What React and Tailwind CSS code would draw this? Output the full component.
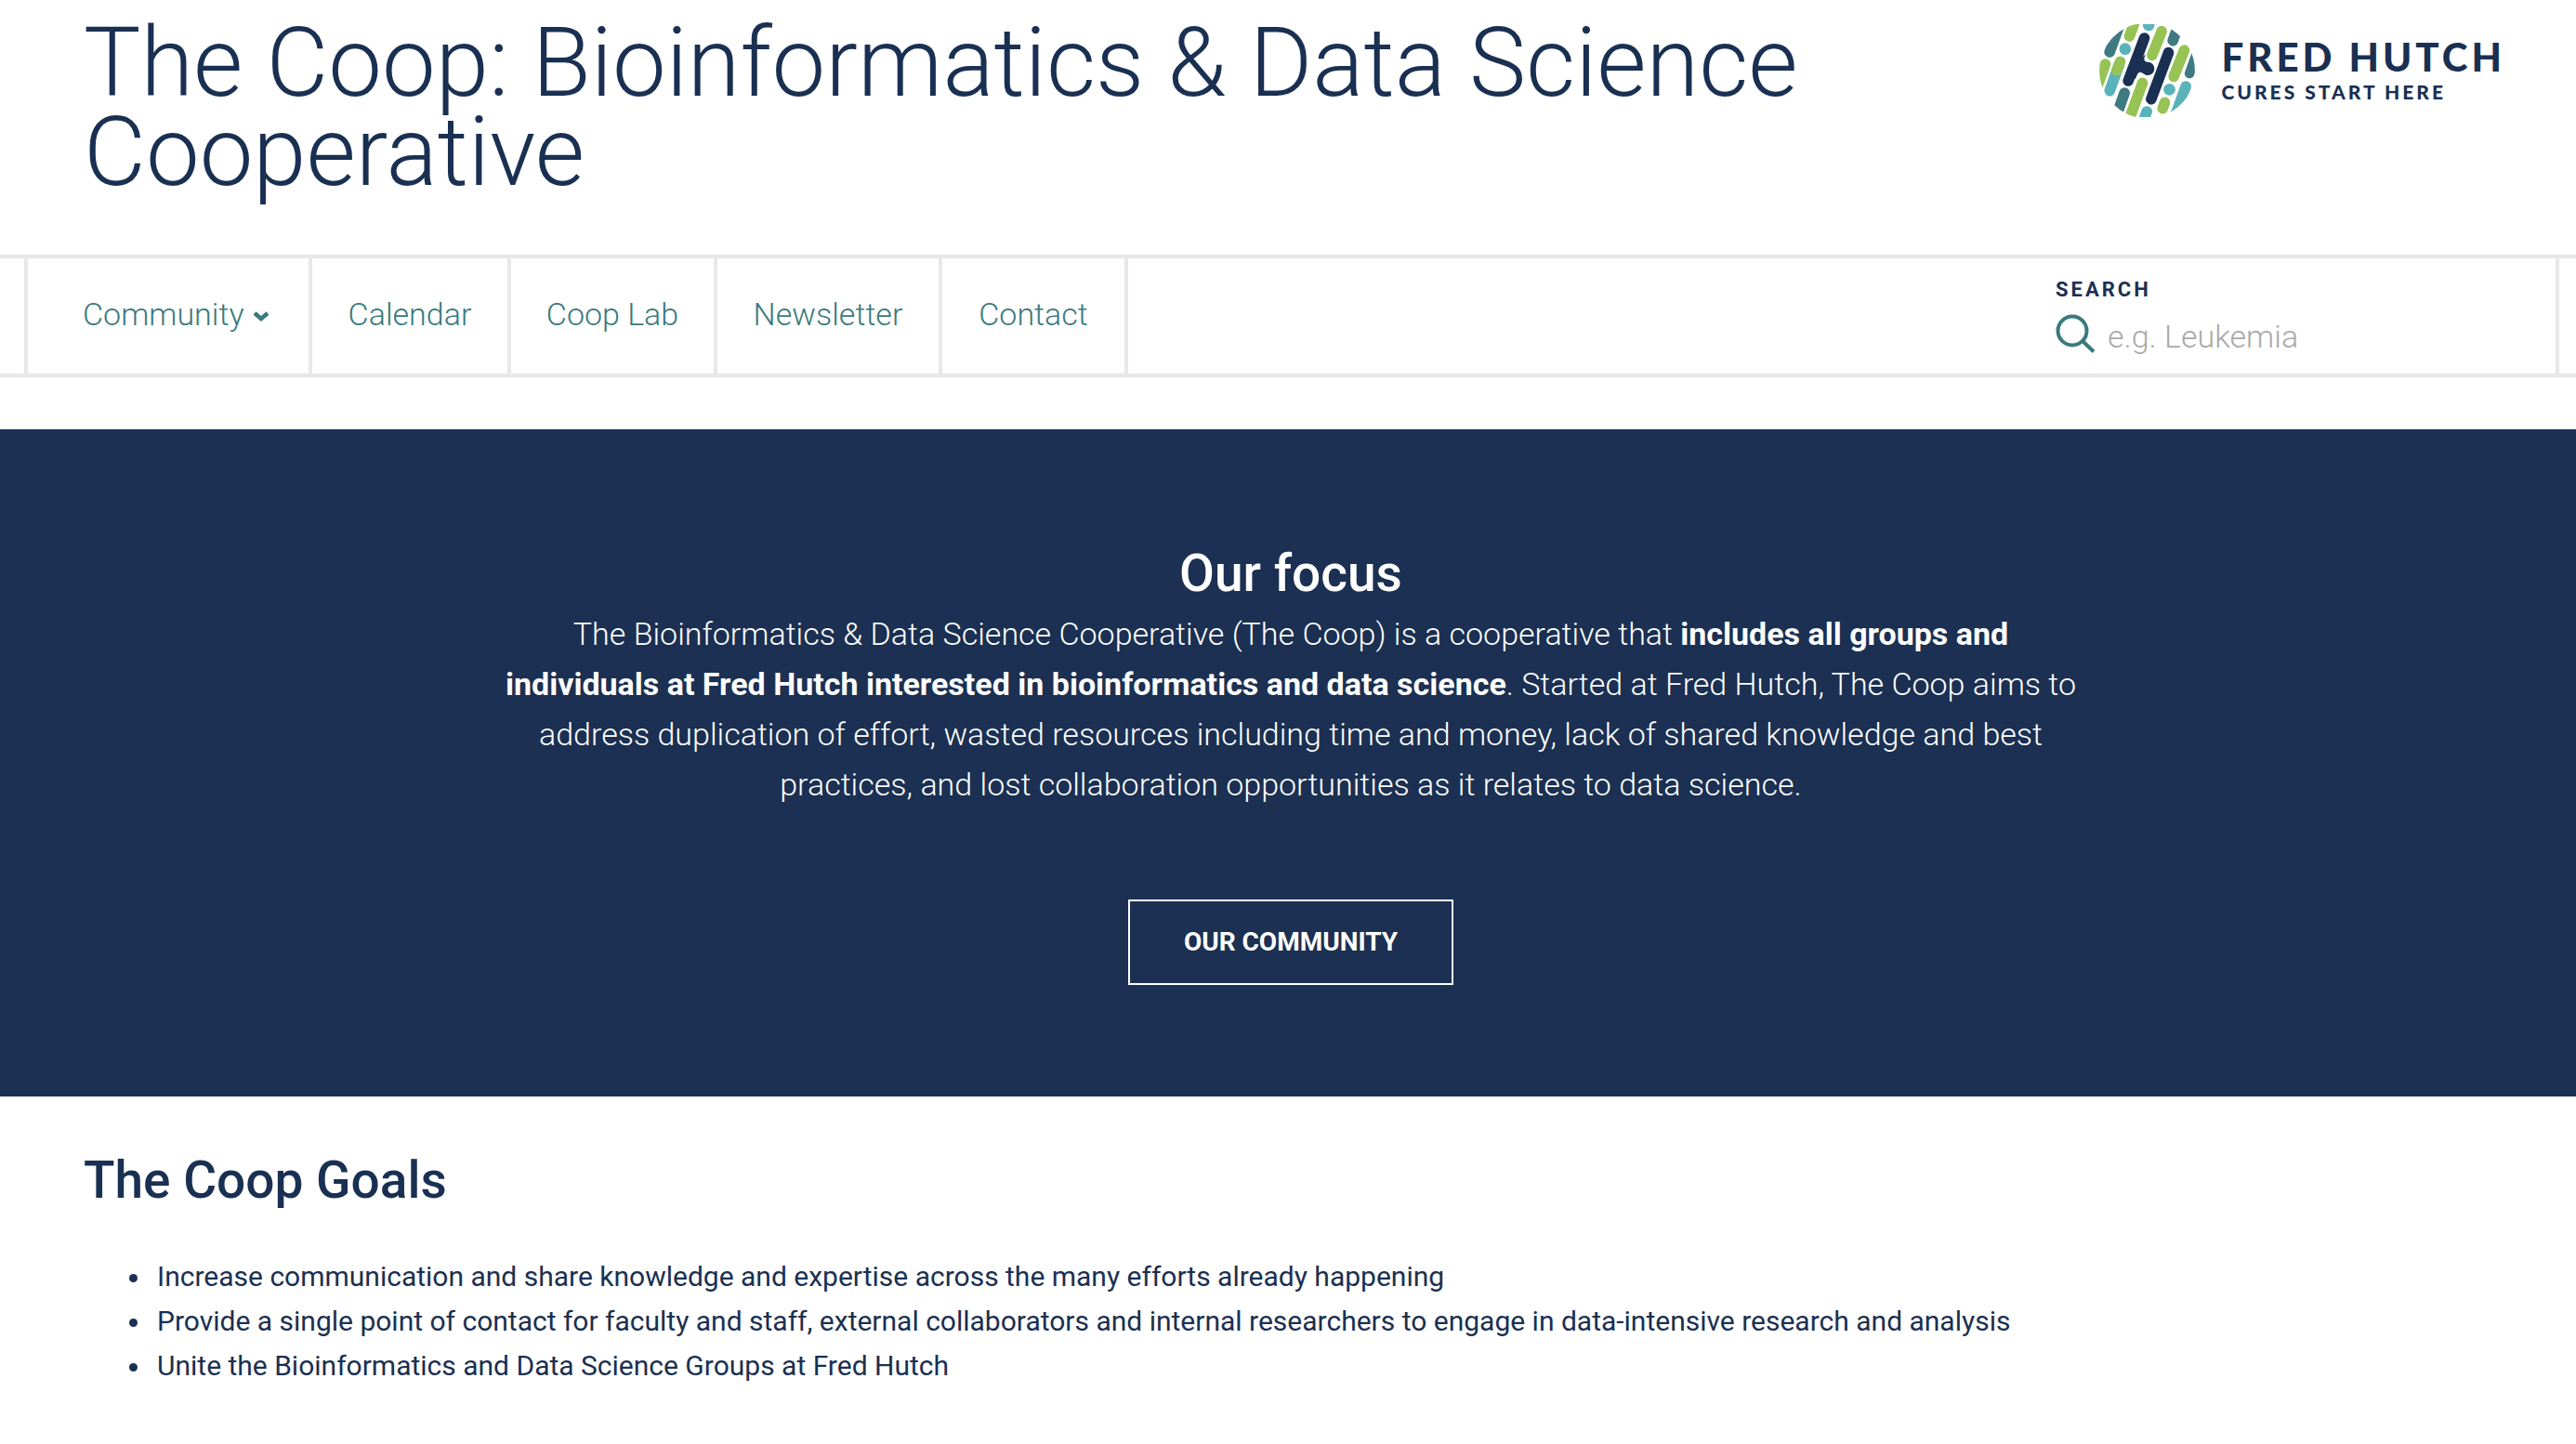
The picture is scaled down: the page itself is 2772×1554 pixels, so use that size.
import React from "react";

const links = [
  { label: "Calendar", width: "w-[214px]" },
  { label: "Coop Lab", width: "w-[222px]" },
  { label: "Newsletter", width: "w-[242px]" },
  { label: "Contact", width: "w-[200px]" },
];

const goals = [
  "Increase communication and share knowledge and expertise across the many efforts already happening",
  "Provide a single point of contact for faculty and staff, external collaborators and internal researchers to engage in data-intensive research and analysis",
  "Unite the Bioinformatics and Data Science Groups at Fred Hutch",
];

function LogoMark() {
  return (
    <svg viewBox="60 48 308 300" className="h-[100px] w-[103px] shrink-0" aria-hidden="true">
      <defs>
        <clipPath id="mark">
          <circle cx="214" cy="198" r="154" />
        </clipPath>
      </defs>
      <g clipPath="url(#mark)" fill="none" strokeLinecap="round" strokeWidth="35">
        <g stroke="#3f7a82">
          <path d="M93 138L122 58" />
          <path d="M297 101L323 30" />
          <path d="M351 207L377 135" strokeWidth="32" />
          <path d="M141 270L119 332" />
        </g>
        <g stroke="#5bb3ba">
          <path d="M123 180L93 263" />
          <path d="M339 249L305 343" />
          <path d="M213 330L205 352" />
        </g>
        <g fill="#5bb3ba">
          <circle cx="143" cy="128" r="19" />
          <circle cx="286" cy="259" r="19" />
          <circle cx="219" cy="51" r="19" />
        </g>
        <g stroke="#97c355">
          <path d="M157 87L185 10" />
          <path d="M261 71L230 148" />
          <path d="M334 132L300 217" />
          <path d="M79 177L54 246" />
          <path d="M127 169L116 197" />
          <path d="M199 238L158 350" />
          <path d="M271 301L264 320" />
        </g>
        <g stroke="#1a3052">
          <path d="M205 93L153 231" />
          <path d="M283 140L227 290" />
        </g>
        <path
          d="M209 144C203 160 202 170 216 170A21.500 21.500 0 0 1 216 213C204 213 202 204 192 203C184 203 182 210 176 226L160 200Z"
          fill="#1a3052"
        />
      </g>
    </svg>
  );
}

export default function App() {
  return (
    <div className="min-h-screen bg-white font-[Roboto,sans-serif] text-[#1a3052]">
      <header className="flex items-start justify-between pt-5 pr-[76px] pl-[90px]">
        <h1 className="max-w-[1960px] text-[103px] leading-24 font-light">
          The Coop: Bioinformatics &amp; Data Science Cooperative
        </h1>
        <a href="#home" className="mt-1.5 flex items-start gap-7 font-[Lato,sans-serif] font-black">
          <LogoMark />
          <span className="flex flex-col pt-[15px]">
            <span className="text-[42px] leading-10 tracking-[4px] whitespace-nowrap">FRED HUTCH</span>
            <span className="text-[21px] leading-9 tracking-[3px] whitespace-nowrap">CURES START HERE</span>
          </span>
        </a>
      </header>

      <nav className="mt-[62px] border-y-4 border-[#e8e8e8] pr-[18px] pl-[26px]">
        <div className="flex h-31 items-stretch border-x-4 border-[#e8e8e8]">
          <button
            type="button"
            className="flex w-[306px] items-center gap-2 border-r-4 border-[#e8e8e8] pb-1 pl-[59px] text-[34px] font-light text-[#3a7a7d]"
          >
            Community
            <svg viewBox="0 0 20 14" className="mt-1 h-3.5 w-5" aria-hidden="true">
              <path d="M3 4L10 10L17 4" fill="none" stroke="currentColor" strokeWidth="4.500" />
            </svg>
          </button>
          {links.map((l) => (
            <a
              key={l.label}
              href="#nav"
              className={`${l.width} flex items-center justify-center border-r-4 border-[#e8e8e8] pb-1 text-[34px] font-light text-[#3a7a7d]`}
            >
              {l.label}
            </a>
          ))}
          <form className="mr-[38px] ml-auto flex w-[500px] flex-col pt-[18px]">
            <label htmlFor="search" className="text-[22px] leading-8 font-bold tracking-[3px]">
              SEARCH
            </label>
            <div className="flex items-start gap-3 pt-2">
              <svg viewBox="0 0 44 44" className="h-11 w-11 shrink-0" aria-hidden="true">
                <g fill="none" stroke="#3a7a7d" strokeWidth="4">
                  <circle cx="18" cy="20" r="15.500" />
                  <path d="M29 31L41 42.500" />
                </g>
              </svg>
              <input
                id="search"
                type="text"
                placeholder="e.g. Leukemia"
                className="h-13 min-w-0 flex-1 bg-transparent text-[34px] font-light outline-none placeholder:text-[#a9a9a9]"
              />
            </div>
          </form>
        </div>
      </nav>

      <section className="mt-14 flex flex-col items-center bg-[#1b3052] pt-30 pb-30 pl-1.5 text-white">
        <h2 className="text-[55px] leading-[70px] font-medium">Our focus</h2>
        <p className="mt-[3px] max-w-[1720px] text-center text-[34px] leading-[54px] font-light">
          The Bioinformatics &amp; Data Science Cooperative (The Coop) is a cooperative that{" "}
          <strong className="font-bold">
            includes all groups and
            <br />
            individuals at Fred Hutch interested in bioinformatics and data science
          </strong>
          . Started at Fred Hutch, The Coop aims to
          <br />
          address duplication of effort, wasted resources including time and money, lack of shared knowledge and best
          <br />
          practices, and lost collaboration opportunities as it relates to data science.
        </p>
        <a
          href="#community"
          className="mt-[97px] flex h-[92px] w-[350px] items-center justify-center border-2 border-white text-[28px] font-bold"
        >
          OUR COMMUNITY
        </a>
      </section>

      <section className="px-[90px] pt-13">
        <h2 className="text-[55px] leading-19 font-medium">The Coop Goals</h2>
        <ul className="mt-[42px] list-disc pl-[74px] text-[30px] leading-12">
          {goals.map((g) => (
            <li key={g} className="pl-[5px]">{g}</li>
          ))}
        </ul>
      </section>
    </div>
  );
}
